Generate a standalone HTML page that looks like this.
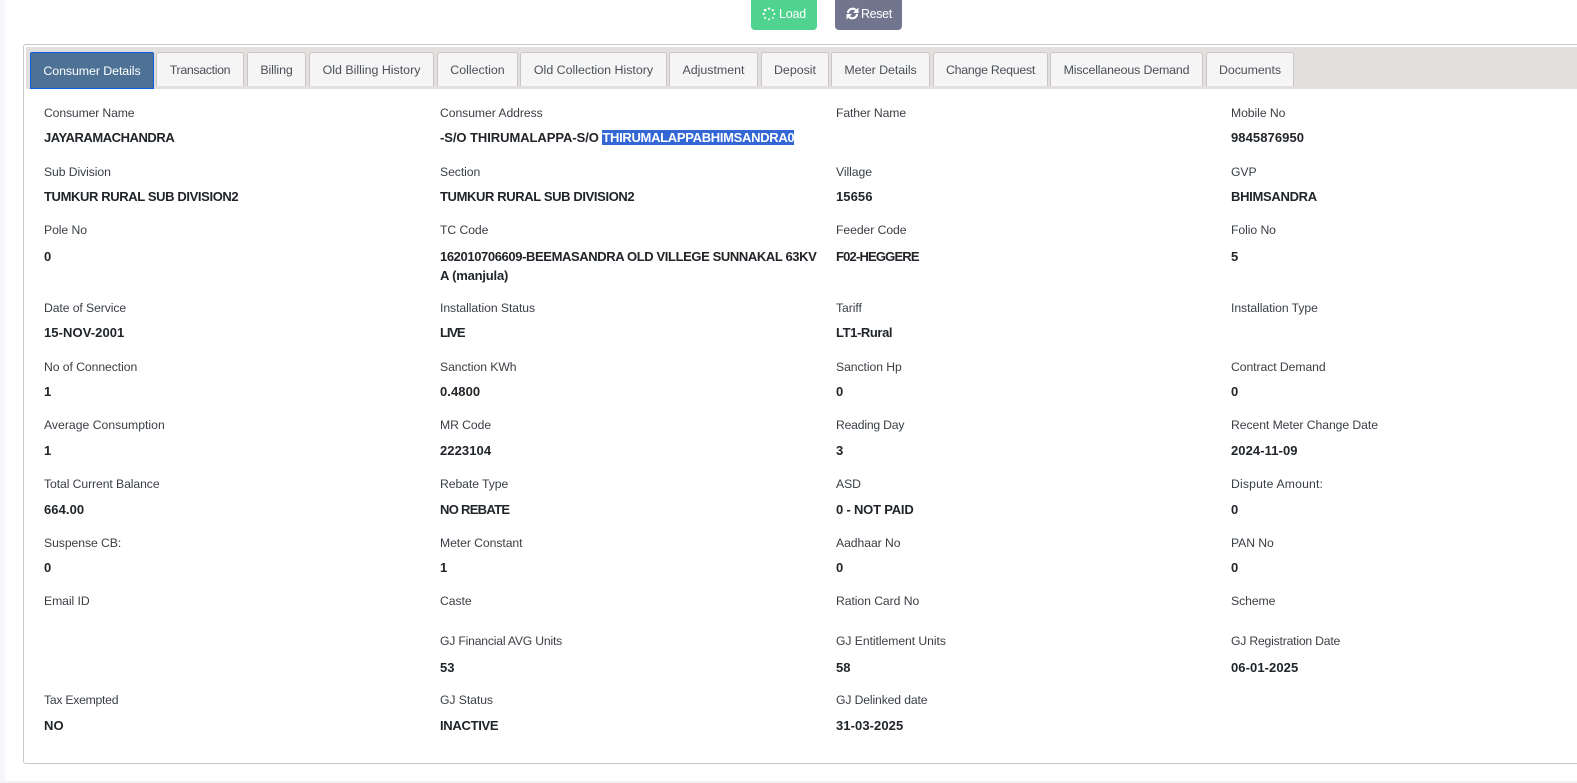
<!DOCTYPE html>
<html><head><meta charset="utf-8"><style>
html,body{margin:0;padding:0;width:1577px;height:783px;overflow:hidden;background:#fff}
body{position:relative;font-family:"Liberation Sans",sans-serif}
#bgl{position:absolute;left:0;top:0;width:5px;height:783px;background:#f4f6f9}
#bgb{position:absolute;left:0;top:781px;width:1577px;height:2px;background:#f0f2f6}
#panel{position:absolute;left:23px;top:44px;width:1570px;height:718px;border:1px solid #c8c8c8;border-radius:3px;box-sizing:content-box}
#strip{position:absolute;left:26px;top:47px;width:1551px;height:42px;background:#e2dfde}
.tab{position:absolute;top:52px;height:34px;box-sizing:border-box;background:#f5f5f5;border:1px solid #c9c6c5;border-bottom:none;border-radius:3px 3px 0 0;font-size:12.4px;line-height:35px;text-align:center;color:#4b5058;white-space:nowrap}
.tab.on{left:30px;width:124px;height:37px;background:#4d7296;border:1px solid #0d5be0;color:#fff;border-radius:2px 2px 0 0;line-height:37px;letter-spacing:-.08px}
.btn{position:absolute;top:-4px;height:34px;border-radius:4px;color:#fff;font-size:12.5px;line-height:34px;box-sizing:border-box;white-space:nowrap}
.btn svg{position:absolute;top:11px}
.btn span{position:absolute;top:1px}
.l,.v{position:absolute;white-space:nowrap;line-height:18px}
.l{font-size:12.2px;color:#3a3f45;letter-spacing:-.06px}
.v{font-size:13px;font-weight:bold;color:#212529;letter-spacing:.08px}
.sel{background:#3367d6;color:#fff;letter-spacing:-.31px}
</style></head><body>
<div id="bgl"></div><div id="bgb"></div>
<div class="btn" style="left:751px;width:66px;background:#50d38e"><svg style="left:11px" width="14" height="14" viewBox="0 0 15 15" fill="#fff"><circle cx="7.5" cy="1.8" r="1.3"/><circle cx="11.6" cy="3.4" r="1.2"/><circle cx="13.2" cy="7.5" r="1.1"/><circle cx="11.6" cy="11.6" r="1"/><circle cx="7.5" cy="13.2" r="1"/><circle cx="3.4" cy="11.6" r="1.1"/><circle cx="1.8" cy="7.5" r="1.2"/><circle cx="3.4" cy="3.4" r="1.4"/></svg><span style="left:28px;letter-spacing:-.2px">Load</span></div>
<div class="btn" style="left:835px;width:67px;background:#71768e"><svg style="left:11px" width="13" height="13" viewBox="0 0 13 13" fill="none"><path d="M2 6A4.6 4.6 0 0 1 10 3.2" stroke="#fff" stroke-width="2.1"/><path d="M12.5 .5V6H7Z" fill="#fff"/><path d="M11 7A4.6 4.6 0 0 1 3 9.8" stroke="#fff" stroke-width="2.1"/><path d="M.5 12.5V7H6Z" fill="#fff"/></svg><span style="left:26px;letter-spacing:-.35px">Reset</span></div>
<div id="panel"></div><div id="strip"></div>
<div class="tab on">Consumer Details</div>
<div class="tab" style="left:156px;width:88px;letter-spacing:-.35px">Transaction</div>
<div class="tab" style="left:247px;width:59px;letter-spacing:-.1px">Billing</div>
<div class="tab" style="left:309px;width:125px">Old Billing History</div>
<div class="tab" style="left:437px;width:81px">Collection</div>
<div class="tab" style="left:520px;width:147px">Old Collection History</div>
<div class="tab" style="left:669px;width:89px">Adjustment</div>
<div class="tab" style="left:761px;width:68px">Deposit</div>
<div class="tab" style="left:831px;width:99px;letter-spacing:-.05px">Meter Details</div>
<div class="tab" style="left:933px;width:115px;letter-spacing:-.28px">Change Request</div>
<div class="tab" style="left:1050px;width:153px;letter-spacing:-.15px">Miscellaneous Demand</div>
<div class="tab" style="left:1206px;width:88px;letter-spacing:-.08px">Documents</div>

<div class="l" style="left:44px;top:104px;letter-spacing:-.13px">Consumer Name</div><div class="v" style="left:44px;top:129px;letter-spacing:-.45px">JAYARAMACHANDRA</div>
<div class="l" style="left:440px;top:104px">Consumer Address</div><div class="v" style="left:440px;top:129px;letter-spacing:-.06px">-S/O THIRUMALAPPA-S/O <span class="sel">THIRUMALAPPABHIMSANDRA0</span></div>
<div class="l" style="left:836px;top:104px;letter-spacing:-.1px">Father Name</div>
<div class="l" style="left:1231px;top:104px">Mobile No</div><div class="v" style="left:1231px;top:129px">9845876950</div>

<div class="l" style="left:44px;top:163px;letter-spacing:-.08px">Sub Division</div><div class="v" style="left:44px;top:188px;letter-spacing:-.38px">TUMKUR RURAL SUB DIVISION2</div>
<div class="l" style="left:440px;top:163px">Section</div><div class="v" style="left:440px;top:188px;letter-spacing:-.38px">TUMKUR RURAL SUB DIVISION2</div>
<div class="l" style="left:836px;top:163px">Village</div><div class="v" style="left:836px;top:188px">15656</div>
<div class="l" style="left:1231px;top:163px">GVP</div><div class="v" style="left:1231px;top:188px;letter-spacing:-.3px">BHIMSANDRA</div>

<div class="l" style="left:44px;top:221px">Pole No</div><div class="v" style="left:44px;top:248px">0</div>
<div class="l" style="left:440px;top:221px">TC Code</div><div class="v" style="left:440px;top:248px;letter-spacing:-.39px">162010706609-BEEMASANDRA OLD VILLEGE SUNNAKAL 63KV</div><div class="v" style="left:440px;top:267px;letter-spacing:-.2px">A (manjula)</div>
<div class="l" style="left:836px;top:221px">Feeder Code</div><div class="v" style="left:836px;top:248px;letter-spacing:-.82px">F02-HEGGERE</div>
<div class="l" style="left:1231px;top:221px">Folio No</div><div class="v" style="left:1231px;top:248px">5</div>

<div class="l" style="left:44px;top:299px;letter-spacing:-.08px">Date of Service</div><div class="v" style="left:44px;top:324px">15-NOV-2001</div>
<div class="l" style="left:440px;top:299px">Installation Status</div><div class="v" style="left:440px;top:324px;letter-spacing:-1.1px">LIVE</div>
<div class="l" style="left:836px;top:299px">Tariff</div><div class="v" style="left:836px;top:324px;letter-spacing:-.4px">LT1-Rural</div>
<div class="l" style="left:1231px;top:299px">Installation Type</div>

<div class="l" style="left:44px;top:358px">No of Connection</div><div class="v" style="left:44px;top:383px">1</div>
<div class="l" style="left:440px;top:358px">Sanction KWh</div><div class="v" style="left:440px;top:383px">0.4800</div>
<div class="l" style="left:836px;top:358px">Sanction Hp</div><div class="v" style="left:836px;top:383px">0</div>
<div class="l" style="left:1231px;top:358px">Contract Demand</div><div class="v" style="left:1231px;top:383px">0</div>

<div class="l" style="left:44px;top:416px;letter-spacing:.02px">Average Consumption</div><div class="v" style="left:44px;top:442px">1</div>
<div class="l" style="left:440px;top:416px">MR Code</div><div class="v" style="left:440px;top:442px">2223104</div>
<div class="l" style="left:836px;top:416px;letter-spacing:-.2px">Reading Day</div><div class="v" style="left:836px;top:442px">3</div>
<div class="l" style="left:1231px;top:416px">Recent Meter Change Date</div><div class="v" style="left:1231px;top:442px">2024-11-09</div>

<div class="l" style="left:44px;top:475px;letter-spacing:-.08px">Total Current Balance</div><div class="v" style="left:44px;top:501px">664.00</div>
<div class="l" style="left:440px;top:475px">Rebate Type</div><div class="v" style="left:440px;top:501px;letter-spacing:-.7px">NO REBATE</div>
<div class="l" style="left:836px;top:475px">ASD</div><div class="v" style="left:836px;top:501px;letter-spacing:-.2px">0 - NOT PAID</div>
<div class="l" style="left:1231px;top:475px;letter-spacing:.18px">Dispute Amount:</div><div class="v" style="left:1231px;top:501px">0</div>

<div class="l" style="left:44px;top:534px">Suspense CB:</div><div class="v" style="left:44px;top:559px">0</div>
<div class="l" style="left:440px;top:534px">Meter Constant</div><div class="v" style="left:440px;top:559px">1</div>
<div class="l" style="left:836px;top:534px">Aadhaar No</div><div class="v" style="left:836px;top:559px">0</div>
<div class="l" style="left:1231px;top:534px">PAN No</div><div class="v" style="left:1231px;top:559px">0</div>

<div class="l" style="left:44px;top:592px">Email ID</div>
<div class="l" style="left:440px;top:592px">Caste</div>
<div class="l" style="left:836px;top:592px">Ration Card No</div>
<div class="l" style="left:1231px;top:592px">Scheme</div>

<div class="l" style="left:440px;top:632px;letter-spacing:-.2px">GJ Financial AVG Units</div><div class="v" style="left:440px;top:659px">53</div>
<div class="l" style="left:836px;top:632px">GJ Entitlement Units</div><div class="v" style="left:836px;top:659px">58</div>
<div class="l" style="left:1231px;top:632px;letter-spacing:-.2px">GJ Registration Date</div><div class="v" style="left:1231px;top:659px">06-01-2025</div>

<div class="l" style="left:44px;top:691px;letter-spacing:-.25px">Tax Exempted</div><div class="v" style="left:44px;top:717px">NO</div>
<div class="l" style="left:440px;top:691px">GJ Status</div><div class="v" style="left:440px;top:717px;letter-spacing:-.3px">INACTIVE</div>
<div class="l" style="left:836px;top:691px;letter-spacing:-.13px">GJ Delinked date</div><div class="v" style="left:836px;top:717px">31-03-2025</div>
</body></html>
